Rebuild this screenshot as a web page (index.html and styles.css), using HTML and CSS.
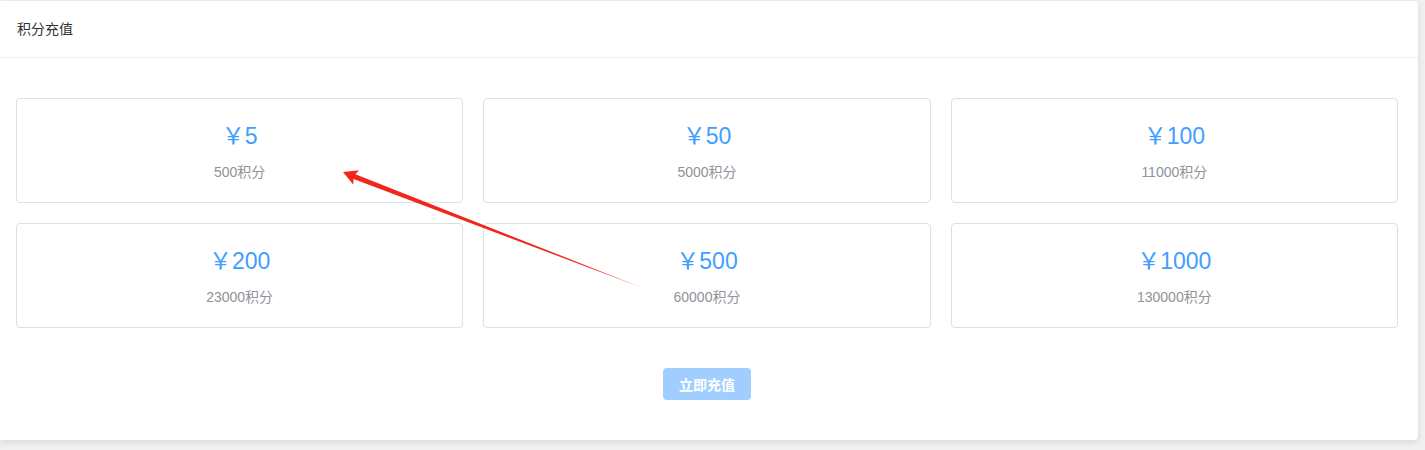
FILE: index.html
```html
<!DOCTYPE html>
<html lang="zh-CN">
<head>
<meta charset="utf-8">
<title>积分充值</title>
<link rel="stylesheet" href="styles.css">
</head>
<body>
<div class="panel">
  <div class="panel-header">积分充值</div>
  <div class="panel-body">
    <div class="grid">
      <div class="option"><div class="price">￥5</div><div class="points">500积分</div></div>
      <div class="option"><div class="price">￥50</div><div class="points">5000积分</div></div>
      <div class="option"><div class="price">￥100</div><div class="points">11000积分</div></div>
      <div class="option"><div class="price">￥200</div><div class="points">23000积分</div></div>
      <div class="option"><div class="price">￥500</div><div class="points">60000积分</div></div>
      <div class="option"><div class="price">￥1000</div><div class="points">130000积分</div></div>
    </div>
    <div class="actions"><button class="btn" disabled>立即充值</button></div>
  </div>
</div>
<svg class="arrow" width="1425" height="450" viewBox="0 0 1425 450">
  <defs>
    <linearGradient id="g" x1="343" y1="172" x2="648" y2="290" gradientUnits="userSpaceOnUse">
      <stop offset="0" stop-color="#f2261a"/>
      <stop offset="0.8" stop-color="#f2261a"/>
      <stop offset="1" stop-color="#f7a39c"/>
    </linearGradient>
  </defs>
  <polygon fill="url(#g)" points="343,172 359,170.3 355.4,174.3 648,290 353.6,178.9 353.2,184.5"/>
</svg>
</body>
</html>
```
FILE: styles.css
```css
html, body {
  margin: 0;
  padding: 0;
  background: #f0f0f0;
  font-family: "Liberation Sans", "Noto Sans CJK SC", sans-serif;
}
body {
  width: 1425px;
  height: 450px;
  position: relative;
  overflow: hidden;
}
.panel {
  width: 1418px;
  margin-top: 1px;
  background: #fff;
  border-radius: 0 4px 4px 0;
  box-shadow: 0 2px 6px rgba(0, 0, 0, 0.1);
}
.panel-header {
  height: 56px;
  line-height: 56px;
  padding-left: 17px;
  font-size: 14px;
  color: #303133;
  border-bottom: 1px solid #ebeef5;
}
.panel-body {
  padding: 40px 20px 40px 16px;
}
.grid {
  display: grid;
  grid-template-columns: repeat(3, 1fr);
  gap: 20px;
}
.option {
  height: 103px;
  border: 1px solid #dcdfe6;
  border-radius: 4px;
  text-align: center;
  box-sizing: content-box;
}
.price {
  margin-top: 19px;
  height: 36px;
  line-height: 36px;
  font-size: 23px;
  color: #409eff;
}
.points {
  margin-top: 8px;
  line-height: 20px;
  font-size: 14px;
  color: #909399;
}
.actions {
  display: flex;
  justify-content: center;
  margin-top: 40px;
}
.btn {
  width: 88px;
  height: 32px;
  border: none;
  border-radius: 4px;
  background: #a0cfff;
  color: #fff;
  font-family: inherit;
  font-size: 14px;
  font-weight: bold;
  padding: 0;
}
.arrow {
  position: absolute;
  left: 0;
  top: 0;
  pointer-events: none;
}
```
